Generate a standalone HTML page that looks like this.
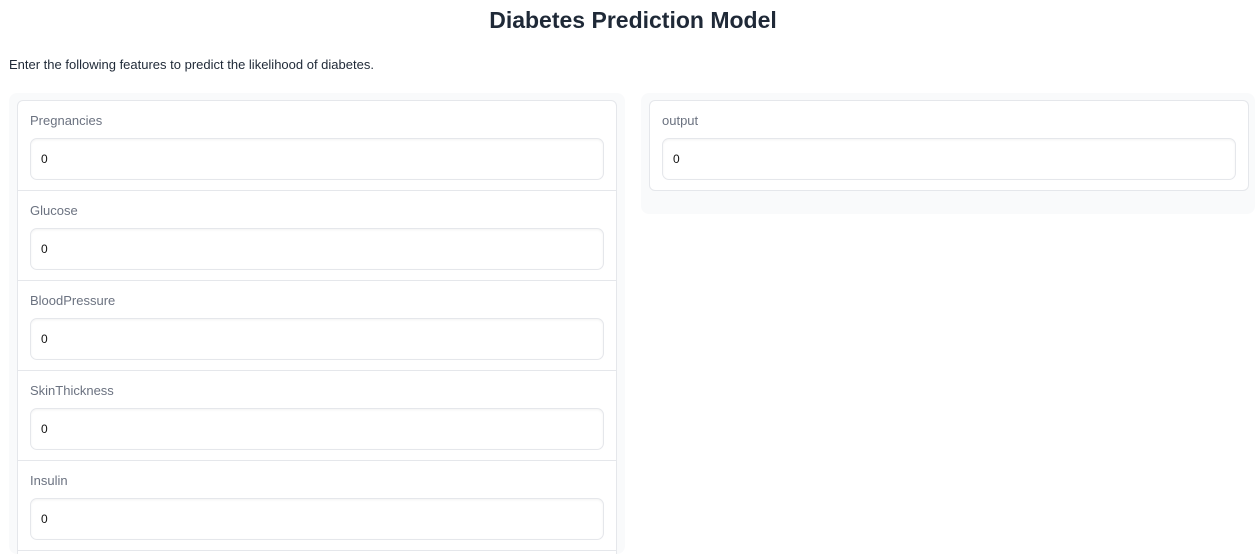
<!DOCTYPE html>
<html style="overflow:hidden;height:554px"><head><style>
body{margin:0;width:1255px;height:554px;overflow:hidden;background:#fff;font-family:"Liberation Sans",sans-serif;color:#1f2937;position:relative}
h1{position:absolute;top:5px;left:0;width:1266px;text-align:center;margin:0;font-size:23px;font-weight:bold;line-height:30px;color:#1f2937}
.sub{position:absolute;left:9px;top:57px;font-size:13px;line-height:16px}
.panel{position:absolute;background:#f9fafb;border-radius:8px}
.card{position:absolute;background:#fff;border:1px solid #e5e7eb;border-radius:6px;overflow:hidden}
.row{position:relative;height:89px;border-bottom:1px solid #e5e7eb}
.lab{position:absolute;left:12px;top:12px;font-size:13px;color:#6b7280}
.inp{position:absolute;left:12px;right:12px;top:37px;height:42px;border:1px solid #e5e7eb;border-radius:7px;box-shadow:inset 0 1px 2px rgba(0,0,0,.05);font-size:12px;line-height:40px;padding-left:10px;box-sizing:border-box;color:#111}
</style></head><body>
<h1>Diabetes Prediction Model</h1>
<div class="sub">Enter the following features to predict the likelihood of diabetes.</div>
<div class="panel" style="left:9px;top:93px;width:616px;height:461px"></div>
<div class="card" style="left:17px;top:100px;width:598px;height:470px">
<div class="row"><div class="lab">Pregnancies</div><div class="inp">0</div></div>
<div class="row"><div class="lab">Glucose</div><div class="inp">0</div></div>
<div class="row"><div class="lab">BloodPressure</div><div class="inp">0</div></div>
<div class="row"><div class="lab">SkinThickness</div><div class="inp">0</div></div>
<div class="row"><div class="lab">Insulin</div><div class="inp">0</div></div>
</div>
<div class="panel" style="left:641px;top:93px;width:614px;height:121px"></div>
<div class="card" style="left:649px;top:100px;width:598px;height:89px">
<div class="lab">output</div><div class="inp">0</div>
</div>
</body></html>
